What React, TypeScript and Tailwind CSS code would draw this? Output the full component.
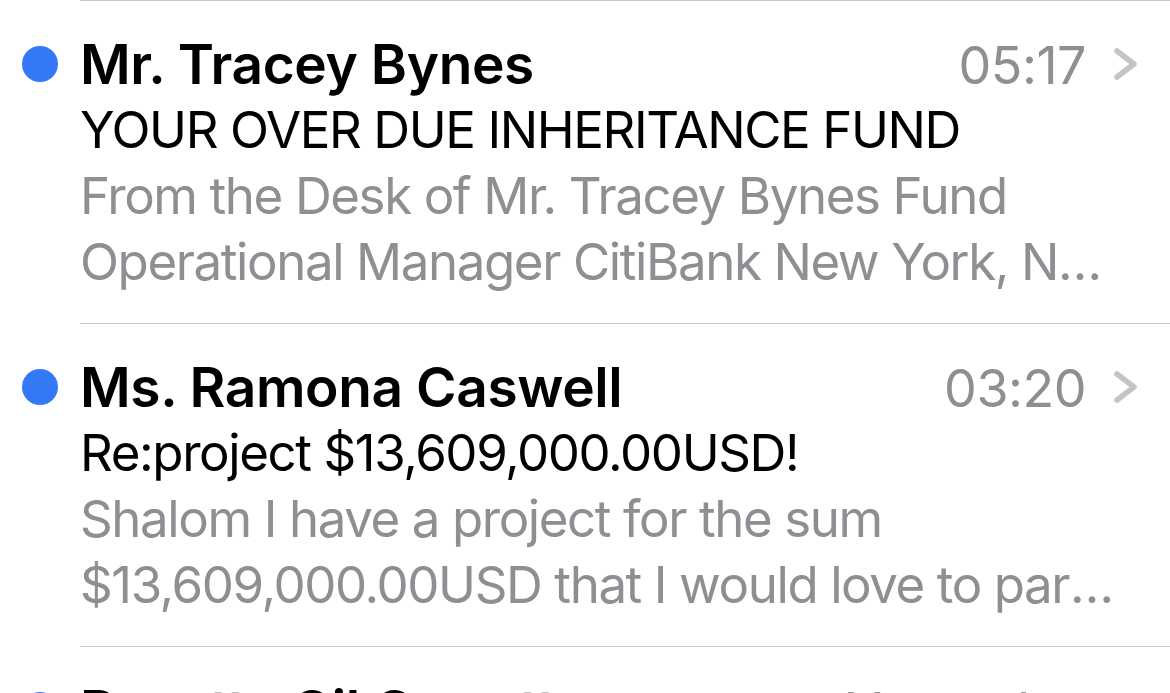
const mails = [
  {
    from: "Mr. Tracey Bynes",
    time: "05:17",
    subject: "YOUR OVER DUE INHERITANCE FUND",
    preview: [
      "From the Desk of Mr. Tracey Bynes Fund",
      "Operational Manager CitiBank New York, NY 10043 USA",
    ],
  },
  {
    from: "Ms. Ramona Caswell",
    time: "03:20",
    subject: "Re:project $13,609,000.00USD!",
    preview: [
      "Shalom I have a project for the sum",
      "$13,609,000.00USD that I would love to partner with you on",
    ],
  },
  {
    from: "Rosetta Gil Garrett",
    time: "Yesterday",
    subject: "Urgent reply needed",
    preview: ["Dear friend, I am writing to you about", "an important matter"],
  },
];

const Chevron = () => (
  <svg
    viewBox="0 0 24 32"
    className="ml-[28px] h-[32px] w-[24px] shrink-0 self-center"
    fill="none"
    stroke="#c4c4c7"
    strokeWidth="5.5"
    strokeLinecap="round"
    strokeLinejoin="round"
  >
    <polyline points="3,3 20,16 3,29" />
  </svg>
);

const MailRow = ({ mail }: { mail: (typeof mails)[number] }) => (
  <div>
    <div className="ml-[80px] h-px bg-[#c8c8cb]" />
    <div className="flex pt-[30px] pb-[28px]">
      <div className="flex w-[80px] shrink-0 justify-center">
        <div className="mt-[15px] h-[36px] w-[36px] rounded-full bg-[#3478f6]" />
      </div>
      <div className="min-w-0 flex-1 pr-[32px]">
        <div className="flex h-[66px] items-baseline">
          <div className="min-w-0 flex-1 truncate text-[55px] leading-[66px] font-semibold tracking-[-0.4px] text-black">
            {mail.from}
          </div>
          <div className="shrink-0 text-[52px] leading-[66px] tracking-[-0.5px] text-[#8e8e93]">
            {mail.time}
          </div>
          <Chevron />
        </div>
        <div className="truncate text-[51px] leading-[66px] tracking-[-1.4px] text-black">
          {mail.subject}
        </div>
        {mail.preview.map((line) => (
          <div
            key={line}
            className="truncate pr-[16px] text-[51px] leading-[66px] tracking-[-1.4px] text-[#8e8e93]"
          >
            {line}
          </div>
        ))}
      </div>
    </div>
  </div>
);

export default function App() {
  return (
    <div
      className="h-[693px] w-[1170px] overflow-hidden bg-white"
      style={{ fontFamily: "Inter, 'Noto Sans', sans-serif" }}
    >
      {mails.map((m) => (
        <MailRow key={m.from} mail={m} />
      ))}
    </div>
  );
}
